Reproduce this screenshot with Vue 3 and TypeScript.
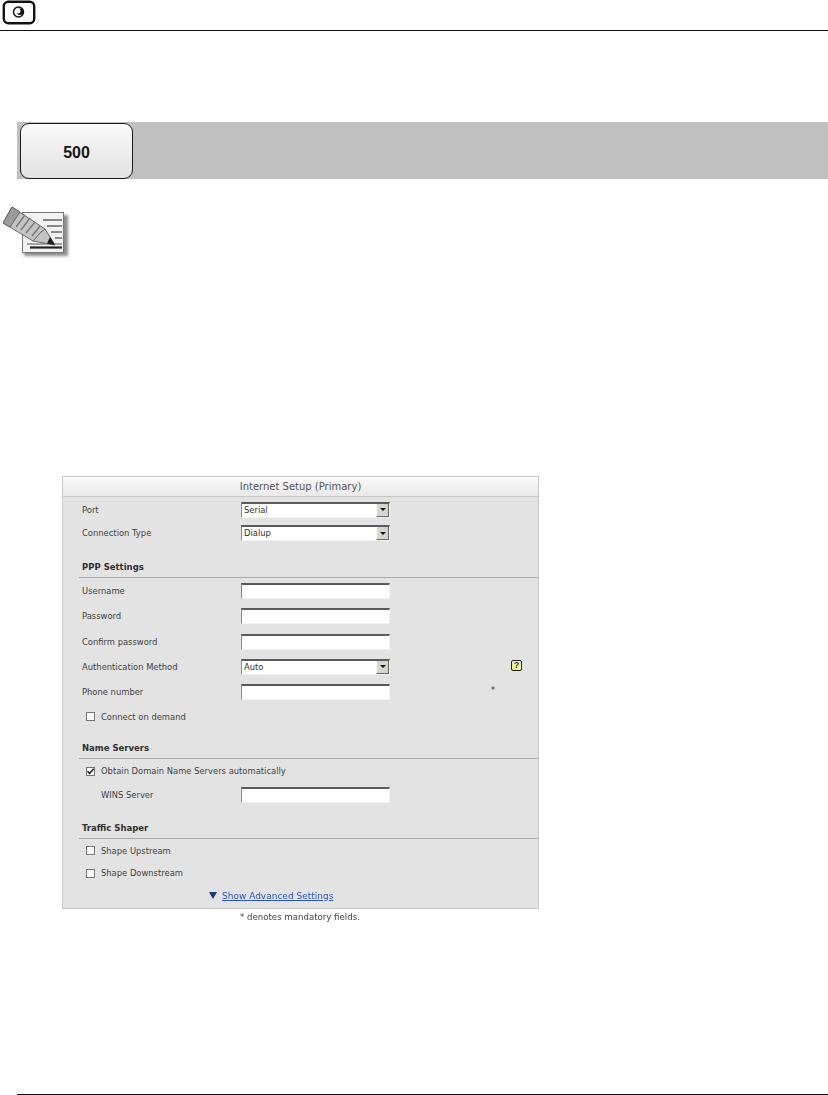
<script setup lang="ts">
type Row = {
  kind: 'select' | 'input' | 'check' | 'heading' | 'wins'
  label: string
  value?: string
  checked?: boolean
  h: number
  help?: boolean
  star?: boolean
}

const rows: Row[] = [
  { kind: 'select', label: 'Port', value: 'Serial', h: 23 },
  { kind: 'select', label: 'Connection Type', value: 'Dialup', h: 24 },
  { kind: 'heading', label: 'PPP Settings', h: 33 },
  { kind: 'input', label: 'Username', h: 25 },
  { kind: 'input', label: 'Password', h: 26 },
  { kind: 'input', label: 'Confirm password', h: 25 },
  { kind: 'select', label: 'Authentication Method', value: 'Auto', h: 25, help: true },
  { kind: 'input', label: 'Phone number', h: 25, star: true },
  { kind: 'check', label: 'Connect on demand', h: 25 },
  { kind: 'heading', label: 'Name Servers', h: 30 },
  { kind: 'check', label: 'Obtain Domain Name Servers automatically', checked: true, h: 24 },
  { kind: 'wins', label: 'WINS Server', h: 23 },
  { kind: 'heading', label: 'Traffic Shaper', h: 33 },
  { kind: 'check', label: 'Shape Upstream', h: 23 },
  { kind: 'check', label: 'Shape Downstream', h: 22 }
]
</script>

<template>
  <div class="page">
    <header class="top">
      <svg class="logo" width="36" height="25" viewBox="0 0 36 25">
        <rect x="3.8" y="1.8" width="30.4" height="21.4" rx="4.5" fill="#fff" stroke="#111" stroke-width="2.4" />
        <circle cx="18.5" cy="12" r="5" fill="none" stroke="#111" stroke-width="1.5" />
        <circle cx="20" cy="11.7" r="3.3" fill="#111" />
        <circle cx="18" cy="11" r="2.5" fill="#fff" />
      </svg>
    </header>

    <section class="band">
      <div class="model">500</div>
    </section>

    <svg class="note" width="68" height="55" viewBox="0 0 68 55">
      <defs>
        <filter id="soft" x="-20%" y="-20%" width="150%" height="150%">
          <feGaussianBlur stdDeviation="1.5" />
        </filter>
        <filter id="soft2" x="-10%" y="-10%" width="120%" height="120%">
          <feGaussianBlur stdDeviation="0.45" />
        </filter>
      </defs>
      <rect x="21" y="10" width="44" height="41" fill="#8c8c8c" filter="url(#soft)" />
      <g filter="url(#soft2)">
        <rect x="19.5" y="7.5" width="41" height="40" fill="#f2f2f2" stroke="#777" />
        <path d="M40 15h19M44 21h15M48 27h11M52 33h7" stroke="#666" stroke-width="1.3" />
        <path d="M24 39h35" stroke="#555" stroke-width="1.2" />
        <path d="M27 42.5h32" stroke="#222" stroke-width="2.2" />
        <path d="M9 2 42 24 52 40 30 36 0 18Z" fill="#c4c4c4" stroke="#666" />
        <path d="M9 2 0 18 7 22 17 7Z" fill="#9c9c9c" stroke="#666" />
        <path d="M13 22 22 10M18 25 27 13M23 28 32 17M29 31 37 21" stroke="#777" stroke-width="1.4" />
        <path d="M30 36 38 27 42 24" fill="none" stroke="#666" />
        <path d="M44 38.5 47 32 52 40Z" fill="#1c1c1c" />
      </g>
    </svg>

    <main class="panel-wrap">
      <div class="panel">
        <div class="panel-title">Internet Setup (Primary)</div>
        <div class="panel-body">
          <template v-for="row in rows" :key="row.label">
            <h3 v-if="row.kind === 'heading'" class="section" :style="{ height: row.h + 'px' }">{{ row.label }}</h3>
            <div v-else class="row" :style="{ height: row.h + 'px' }">
              <template v-if="row.kind === 'check'">
                <span class="box">
                  <svg v-if="row.checked" width="9" height="9" viewBox="0 0 9 9">
                    <path d="M1.5 4.2 3.6 6.6 7.6 1.8" fill="none" stroke="#222" stroke-width="1.6" />
                  </svg>
                </span>
                <span class="check-label">{{ row.label }}</span>
              </template>
              <template v-else>
                <span class="label" :class="{ indented: row.kind === 'wins' }">{{ row.label }}</span>
                <span v-if="row.kind === 'select'" class="select">
                  <span class="select-value">{{ row.value }}</span>
                  <span class="select-arrow"><i></i></span>
                </span>
                <span v-else class="input"></span>
              </template>
              <span v-if="row.help" class="help">?</span>
              <span v-if="row.star" class="star">*</span>
            </div>
          </template>
          <div class="advanced">
            <svg width="8" height="7" viewBox="0 0 8 7"><path d="M0 0h8L4 7Z" fill="#1a3a78" /></svg>
            <a>Show Advanced Settings</a>
          </div>
        </div>
      </div>
      <p class="mandatory">* denotes mandatory fields.</p>
    </main>

    <footer class="bottom"></footer>
  </div>
</template>

<style scoped>
.page {
  position: relative;
  width: 828px;
  height: 1095px;
  overflow: hidden;
  background: #fff;
  font-family: "DejaVu Sans", sans-serif;
  display: flex;
  flex-direction: column;
}
.top {
  height: 30px;
  border-bottom: 1px solid #111;
  flex: none;
}
.logo {
  display: block;
}
.band {
  margin: 91px 0 0 17px;
  height: 57px;
  flex: none;
  background: #c0c0c0;
  padding: 1px 0 0 3px;
  box-sizing: border-box;
}
.model {
  width: 113px;
  height: 56px;
  box-sizing: border-box;
  border: 1.5px solid #1a1a1a;
  border-radius: 9px;
  padding-top: 3px;
  background: linear-gradient(#fafafa, #e2e2e2);
  display: flex;
  align-items: center;
  justify-content: center;
  font: bold 16px "Liberation Sans", sans-serif;
  color: #161616;
}
.note {
  display: block;
  flex: none;
  margin: 26px 0 0 3px;
}
.panel-wrap {
  margin: 216px 0 0 62px;
  width: 477px;
  flex: none;
  filter: blur(0.3px);
}
.panel {
  box-sizing: border-box;
  width: 477px;
  height: 433px;
  background: #e3e3e3;
  border: 1px solid #c9c9c9;
}
.panel-title {
  height: 20px;
  box-sizing: border-box;
  border-bottom: 1px solid #c8c8c8;
  background: linear-gradient(#fafafa, #e9e9e9);
  text-align: center;
  font-size: 10px;
  line-height: 20px;
  color: #555;
}
.panel-body {
  padding-top: 1px;
}
.row {
  position: relative;
  display: flex;
  align-items: center;
  padding-left: 19px;
  font-size: 8.4px;
  color: #3f3f3f;
}
.label {
  width: 159px;
  flex: none;
}
.label.indented {
  box-sizing: border-box;
  padding-left: 19px;
}
.section {
  margin: 0 0 0 16px;
  box-sizing: border-box;
  display: flex;
  align-items: flex-end;
  padding: 0 0 4px 3px;
  border-bottom: 1px solid #a9a9a9;
  font-size: 8.5px;
  line-height: 11px;
  font-weight: 700;
  color: #303030;
}
.select,
.input {
  width: 149px;
  height: 16px;
  box-sizing: border-box;
  background: #fff;
  border-top: 2px solid #5a5a5a;
  border-left: 1px solid #8a8a8a;
  border-right: 1px solid #f2f2f2;
  border-bottom: 1px solid #f2f2f2;
  flex: none;
}
.select {
  display: flex;
  align-items: stretch;
  justify-content: space-between;
  color: #333;
}
.select-value {
  padding-left: 2px;
  line-height: 13px;
}
.select-arrow {
  width: 11px;
  background: #d8d5cc;
  border-left: 1px solid #fff;
  border-right: 1px solid #666;
  border-bottom: 1px solid #666;
  display: flex;
  align-items: center;
  justify-content: center;
}
.select-arrow i {
  width: 0;
  height: 0;
  border: 3px solid transparent;
  border-top-color: #111;
  border-bottom-width: 0;
}
.box {
  width: 9px;
  height: 9px;
  box-sizing: border-box;
  margin-left: 4px;
  background: #fbfbfb;
  border: 1px solid #777;
  display: flex;
  flex: none;
}
.box svg {
  margin: -1px;
}
.check-label {
  margin-left: 6px;
}
.help {
  position: absolute;
  left: 448px;
  top: 6px;
  width: 11px;
  height: 11px;
  box-sizing: border-box;
  border: 1px solid #222;
  border-radius: 2px;
  background: #f5ef9a;
  color: #27308a;
  font: bold 9px/9px "Liberation Sans", sans-serif;
  text-align: center;
}
.star {
  position: absolute;
  left: 428px;
  top: 7px;
  font-size: 8px;
  color: #333;
}
.advanced {
  height: 23px;
  display: flex;
  align-items: center;
  gap: 5px;
  padding-left: 146px;
  font-size: 9px;
}
.advanced a {
  color: #2a55c8;
  text-decoration: underline;
}
.mandatory {
  margin: 3px 0 0;
  padding-left: 178px;
  font-size: 8.6px;
  line-height: 11px;
  color: #444;
}
.bottom {
  position: absolute;
  left: 17px;
  right: 0;
  top: 1094px;
  height: 1px;
  background: #111;
}
</style>
